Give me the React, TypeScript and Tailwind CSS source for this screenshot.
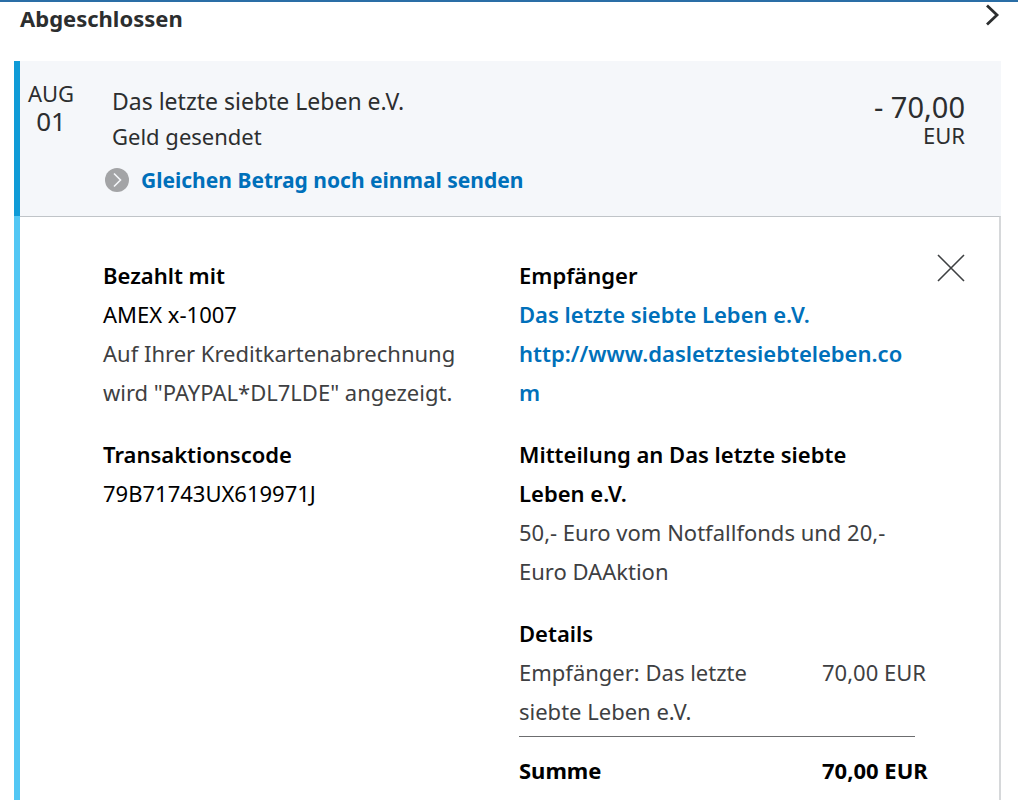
import React from 'react';

interface SectionProps {
  title: string;
  children: React.ReactNode;
}

const Section: React.FC<SectionProps> = ({ title, children }) => (
  <section className="mb-[23px]">
    <h3 className="font-semibold text-black">{title}</h3>
    {children}
  </section>
);

const TransactionHeader: React.FC = () => (
  <div className="flex min-h-[155px] items-start border-l-6 border-[#0f9bd7] bg-[#f5f7fa] pr-9">
    <div className="w-[62px] pt-[18px] text-center text-[#2c2e2f]">
      <div className="text-[22px] leading-7">AUG</div>
      <div className="text-[26px] leading-7">01</div>
    </div>

    <div className="ml-[23px] flex-1 pt-[23px]">
      <div className="pl-[7px] leading-[35px] text-[#2c2e2f]">
        <p className="text-[23px]">Das letzte siebte Leben e.V.</p>
        <p className="text-[22px]">Geld gesendet</p>
      </div>
      <a href="#repeat" className="mt-2 flex items-center gap-3 text-[21px] leading-9 font-bold text-[#0070ba]">
        <svg className="size-6" viewBox="0 0 24 24" fill="none" aria-hidden="true">
          <circle cx="12" cy="12" r="12" fill="#a3a4a6" />
          <path d="M9 5.5l6.5 6.5L9 18.5" stroke="#f5f7fa" strokeWidth="1.6" />
        </svg>
        Gleichen Betrag noch einmal senden
      </a>
    </div>

    <div className="pt-8 text-right text-[#2c2e2f]">
      <div className="text-[29px] leading-7">- 70,00</div>
      <div className="text-[22px] leading-7">EUR</div>
    </div>
  </div>
);

const TransactionDetails: React.FC = () => (
  <div className="border-l-6 border-[#53c7f4]">
    <div className="flex items-start gap-[22px] border-t border-r-2 border-t-[#c0c4c8] border-r-[#d6d8da] pt-[39px] pr-[34px] pb-10 pl-[83px]">
      <div className="grid flex-1 grid-cols-2 gap-5 text-[22px] leading-[39px] text-[#3e4042]">
        <div className="pr-5">
          <Section title="Bezahlt mit">
            <p className="text-black">AMEX x-1007</p>
            <p>Auf Ihrer Kreditkartenabrechnung wird "PAYPAL*DL7LDE" angezeigt.</p>
          </Section>
          <Section title="Transaktionscode">
            <p className="text-black">79B71743UX619971J</p>
          </Section>
        </div>

        <div>
          <Section title="Empfänger">
            <a href="#recipient" className="block font-semibold text-[#0070ba]">
              Das letzte siebte Leben e.V.
            </a>
            <a href="#website" className="block font-semibold break-all text-[#0070ba]">
              http://www.dasletztesiebteleben.com
            </a>
          </Section>
          <Section title="Mitteilung an Das letzte siebte Leben e.V.">
            <p>50,- Euro vom Notfallfonds und 20,- Euro DAAktion</p>
          </Section>
          <Section title="Details">
            <dl>
              <div className="flex border-b border-[#6c6d6f] pb-[5px]">
                <dt className="w-[303px] pr-12">Empfänger: Das letzte siebte Leben e.V.</dt>
                <dd className="w-[93px] whitespace-nowrap">70,00 EUR</dd>
              </div>
              <div className="flex pt-[14px] font-bold text-black">
                <dt className="w-[303px]">Summe</dt>
                <dd className="w-[93px] whitespace-nowrap">70,00 EUR</dd>
              </div>
            </dl>
          </Section>
        </div>
      </div>

      <button type="button" aria-label="Schließen" className="-mt-0.5 h-7 w-7 text-[#3e4042]">
        <svg viewBox="0 0 28 28" fill="none" stroke="currentColor" strokeWidth="1.6">
          <path d="M1 1l26 26M27 1L1 27" />
        </svg>
      </button>
    </div>
  </div>
);

const App: React.FC = () => {
  return (
    <main className="h-screen overflow-hidden border-t-2 border-[#2a6ea6] bg-white font-['Noto_Sans',sans-serif]">
      <header className="flex h-[59px] items-start justify-between pr-[18px] pl-5">
        <h2 className="text-[22px] leading-8 font-bold text-[#2c2e2f]">Abgeschlossen</h2>
        <button type="button" aria-label="Alle anzeigen" className="mt-0.5 text-[#2c2e2f]">
          <svg className="h-[22px] w-[14px]" viewBox="0 0 14 22" fill="none" stroke="currentColor" strokeWidth="2.8">
            <path d="M1 1.5l10 9.5L1 20.5" />
          </svg>
        </button>
      </header>

      <article className="mr-[17px] ml-3.5">
        <TransactionHeader />
        <TransactionDetails />
      </article>
    </main>
  );
};

export default App;
